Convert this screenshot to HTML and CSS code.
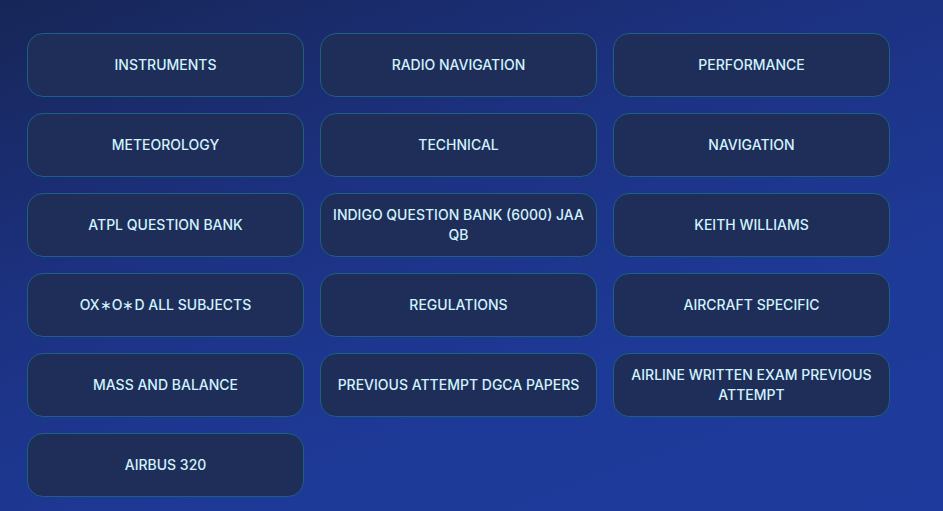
FILE: index.html
```html
<!DOCTYPE html>
<html>
<head>
<meta charset="utf-8">
<link rel="stylesheet" href="styles.css">
</head>
<body>
<main class="page">
  <div class="grid">
    <button class="card">INSTRUMENTS</button>
    <button class="card">RADIO NAVIGATION</button>
    <button class="card">PERFORMANCE</button>
    <button class="card">METEOROLOGY</button>
    <button class="card">TECHNICAL</button>
    <button class="card">NAVIGATION</button>
    <button class="card">ATPL QUESTION BANK</button>
    <button class="card">INDIGO QUESTION BANK (6000) JAA QB</button>
    <button class="card">KEITH WILLIAMS</button>
    <button class="card">OX∗O∗D ALL SUBJECTS</button>
    <button class="card">REGULATIONS</button>
    <button class="card">AIRCRAFT SPECIFIC</button>
    <button class="card">MASS AND BALANCE</button>
    <button class="card">PREVIOUS ATTEMPT DGCA PAPERS</button>
    <button class="card">AIRLINE WRITTEN EXAM PREVIOUS ATTEMPT</button>
    <button class="card">AIRBUS 320</button>
  </div>
</main>
</body>
</html>
```
FILE: styles.css
```css
html, body {
  margin: 0;
  padding: 0;
  height: 100%;
}
body {
  background: linear-gradient(160deg, #172657 0%, #1c3180 35%, #1e3a98 70%, #1e3a9c 100%);
  font-family: Inter, "Noto Sans", sans-serif;
  overflow: hidden;
}
.page {
  padding: 33px 0 0 27px;
}
.grid {
  display: grid;
  grid-template-columns: repeat(3, 277px);
  grid-auto-rows: 64px;
  column-gap: 16px;
  row-gap: 16px;
}
.card {
  background: #1f2e58;
  border: 1px solid #1d5f85;
  border-radius: 16px;
  color: #d0f3ff;
  font-family: Inter, "Noto Sans", sans-serif;
  font-size: 14px;
  font-weight: 500;
  line-height: 20px;
  padding: 0 8px;
  text-align: center;
  display: flex;
  align-items: center;
  justify-content: center;
  cursor: pointer;
}
```
